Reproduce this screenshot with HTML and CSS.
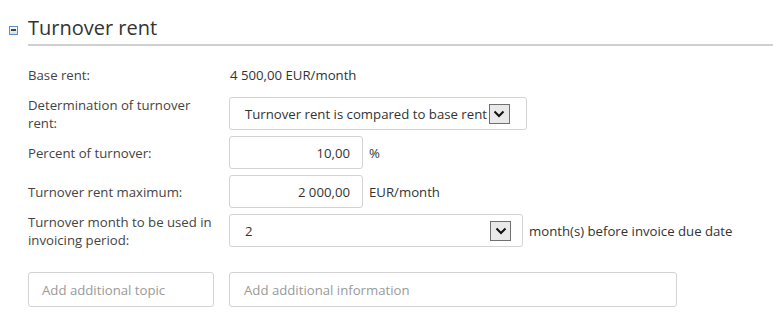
FILE: index.html
```html
<!DOCTYPE html>
<html lang="en">

<head>
    <meta charset="UTF-8">
    <meta name="viewport" content="width=device-width, initial-scale=1.0">
    <title>Turnover rent</title>
    <link rel="stylesheet" href="styles.css">
</head>

<body>
    <div class="section-header">
        <span class="toggle"><span class="toggle-bar"></span></span>
        <h2 class="section-title">Turnover rent</h2>
    </div>

    <div class="form-grid">
        <div class="label">Base rent:</div>
        <div class="field"><span class="value">4 500,00 EUR/month</span></div>

        <div class="label">Determination of turnover rent:</div>
        <div class="field">
            <div class="select select-compact">
                <span class="select-text">Turnover rent is compared to base rent</span>
                <span class="arrow">
                    <svg width="12" height="8" viewBox="0 0 12 8"><path d="M1.5 1.5 L6 6 L10.5 1.5" fill="none" stroke="#111" stroke-width="2"/></svg>
                </span>
            </div>
        </div>

        <div class="label">Percent of turnover:</div>
        <div class="field">
            <div class="input input-number">10,00</div>
            <span class="unit">%</span>
        </div>

        <div class="label">Turnover rent maximum:</div>
        <div class="field">
            <div class="input input-number">2 000,00</div>
            <span class="unit">EUR/month</span>
        </div>

        <div class="label">Turnover month to be used in invoicing period:</div>
        <div class="field">
            <div class="select select-wide">
                <span class="select-text">2</span>
                <span class="arrow">
                    <svg width="12" height="8" viewBox="0 0 12 8"><path d="M1.5 1.5 L6 6 L10.5 1.5" fill="none" stroke="#111" stroke-width="2"/></svg>
                </span>
            </div>
            <span class="unit">month(s) before invoice due date</span>
        </div>
    </div>

    <div class="extra-row">
        <div class="input input-topic placeholder">Add additional topic</div>
        <div class="input input-info placeholder">Add additional information</div>
    </div>
</body>

</html>
```

FILE: styles.css
```css
body {
    margin: 0;
    font-family: "Open Sans", sans-serif;
    font-size: 13.2px;
    color: #333;
    background-color: #FFF;
}

.section-header {
    display: flex;
    align-items: center;
    padding: 13px 0 0 9px;
}

.toggle {
    width: 7px;
    height: 7px;
    border: 1px solid #5B8FD6;
    background: linear-gradient(#FFF, #D8DDE4);
    display: flex;
    align-items: center;
    justify-content: center;
    margin-right: 10px;
    margin-top: 1px;
}

.toggle-bar {
    width: 5px;
    height: 2px;
    background-color: #444;
}

.section-title {
    flex: 1;
    margin: 0;
    font-family: "Open Sans", sans-serif;
    font-weight: normal;
    font-size: 20px;
    color: #333;
    line-height: 30px;
    padding-bottom: 1px;
    border-bottom: 2px solid #D0D0D0;
}

.form-grid {
    display: grid;
    grid-template-columns: 201px auto;
    grid-auto-rows: 33px;
    row-gap: 6px;
    margin: 12px 0 0 28px;
}

.label {
    color: #444;
    line-height: 18px;
    display: flex;
    align-items: center;
    padding-right: 10px;
}

.field {
    display: flex;
    align-items: center;
}

.value {
    padding-left: 1px;
}

.input,
.select {
    box-sizing: border-box;
    height: 33px;
    border: 1px solid #D3D3D3;
    border-radius: 3px;
    background-color: #FFF;
    display: flex;
    align-items: center;
}

.input-number {
    width: 134px;
    justify-content: flex-end;
    padding-right: 12px;
}

.unit {
    margin-left: 6px;
}

.select {
    padding-left: 15px;
}

.select-compact {
    padding-right: 16px;
}

.select-wide {
    width: 294px;
    justify-content: space-between;
    padding-right: 11px;
}

.arrow {
    box-sizing: border-box;
    width: 21px;
    height: 20px;
    margin-left: 2px;
    border: 1px solid #707070;
    background-color: #E9E9E9;
    display: flex;
    align-items: center;
    justify-content: center;
}

.extra-row {
    display: flex;
    gap: 15px;
    margin: 25px 0 0 28px;
}

.input-topic {
    width: 186px;
    height: 35px;
    padding-left: 13px;
}

.input-info {
    width: 448px;
    height: 35px;
    padding-left: 14px;
}

.placeholder {
    color: #9A9A9A;
}
```
